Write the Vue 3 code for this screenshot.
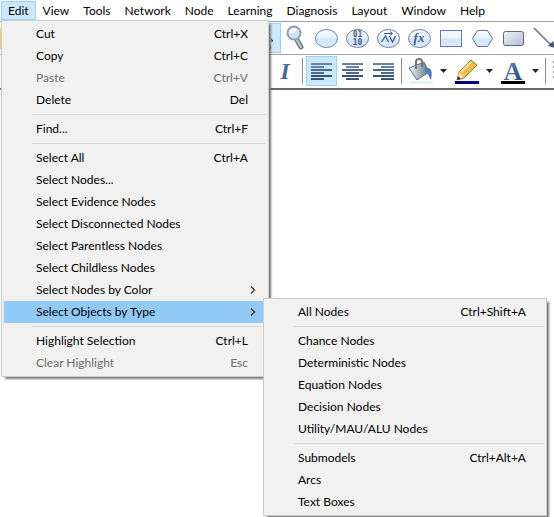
<script setup>
const menus = ['Edit', 'View', 'Tools', 'Network', 'Node', 'Learning', 'Diagnosis', 'Layout', 'Window', 'Help']
const editGroups = [
  [
    { label: 'Cut', key: 'Ctrl+X' },
    { label: 'Copy', key: 'Ctrl+C' },
    { label: 'Paste', key: 'Ctrl+V', disabled: true },
    { label: 'Delete', key: 'Del' },
  ],
  [{ label: 'Find...', key: 'Ctrl+F' }],
  [
    { label: 'Select All', key: 'Ctrl+A' },
    { label: 'Select Nodes...' },
    { label: 'Select Evidence Nodes' },
    { label: 'Select Disconnected Nodes' },
    { label: 'Select Parentless Nodes' },
    { label: 'Select Childless Nodes' },
    { label: 'Select Nodes by Color', sub: true },
    { label: 'Select Objects by Type', sub: true, active: true },
  ],
  [
    { label: 'Highlight Selection', key: 'Ctrl+L' },
    { label: 'Clear Highlight', key: 'Esc', disabled: true },
  ],
]
const typeGroups = [
  [{ label: 'All Nodes', key: 'Ctrl+Shift+A' }],
  [
    { label: 'Chance Nodes' },
    { label: 'Deterministic Nodes' },
    { label: 'Equation Nodes' },
    { label: 'Decision Nodes' },
    { label: 'Utility/MAU/ALU Nodes' },
  ],
  [{ label: 'Submodels', key: 'Ctrl+Alt+A' }, { label: 'Arcs' }, { label: 'Text Boxes' }],
]
const popups = [
  { name: 'edit', title: 'Edit', groups: editGroups },
  { name: 'types', title: 'Select Objects by Type', groups: typeGroups },
]
const alignments = [
  { name: 'Align left', active: true, x: 0 },
  { name: 'Align center', x: 4 },
  { name: 'Align right', x: 8 },
]
</script>

<template>
  <div class="app">
    <nav class="menubar" aria-label="Main menu">
      <button v-for="m in menus" :key="m" :class="{ open: m === 'Edit' }">{{ m }}</button>
    </nav>

    <svg class="defs" aria-hidden="true">
      <defs>
        <linearGradient id="fill" x1="0" y1="0" x2="0" y2="1">
          <stop offset="0" stop-color="#f4f9fe" /><stop offset=".48" stop-color="#e9f3fd" />
          <stop offset=".52" stop-color="#cfe5fb" /><stop offset="1" stop-color="#dcecfc" />
        </linearGradient>
        <linearGradient id="box" x1="0" y1="0" x2="1" y2="1">
          <stop offset="0" stop-color="#f0f3fa" /><stop offset="1" stop-color="#b4bdd6" />
        </linearGradient>
        <linearGradient id="ink" x1="0" y1="0" x2="1" y2="1">
          <stop offset="0" stop-color="#6f92cc" /><stop offset="1" stop-color="#203f7c" />
        </linearGradient>
        <linearGradient id="steel" x1="0" y1="0" x2="1" y2="0">
          <stop offset="0" stop-color="#f5f8fa" /><stop offset="1" stop-color="#5f7183" />
        </linearGradient>
        <linearGradient id="bar" x1="0" y1="0" x2="0" y2="1">
          <stop offset="0" stop-color="#6c87a8" /><stop offset="1" stop-color="#344f78" />
        </linearGradient>
      </defs>
    </svg>

    <div class="toolbar shapes" role="toolbar" aria-label="Drawing tools">
      <span class="folder"></span>
      <button class="tool active" aria-label="Select">
        <svg viewBox="0 0 31 30"><path d="M11 5v18l4-4 3 7 3-1-3-7h5z" fill="#fff" stroke="#333" /></svg>
      </button>
      <button class="tool" aria-label="Zoom">
        <svg viewBox="0 0 31 30">
          <path d="M16 17l4 7" stroke="#74777c" stroke-width="5" stroke-linecap="round" />
          <path d="M16 17l4 7" stroke="#c5c9ce" stroke-width="2" stroke-linecap="round" />
          <circle cx="13" cy="10" r="6.500" fill="#cfe4fa" stroke="#8aa0bb" stroke-width="2" />
          <path d="M8 10a5 5 0 0 1 8-4c-1 4-4 4-8 4z" fill="#f4faff" />
        </svg>
      </button>
      <button class="tool" aria-label="Chance node">
        <svg viewBox="0 0 31 30"><ellipse cx="14.500" cy="15.500" rx="11" ry="9" fill="url(#fill)" stroke="#6580ad" /></svg>
      </button>
      <button class="tool" aria-label="Deterministic node">
        <svg viewBox="0 0 31 30">
          <ellipse cx="14.500" cy="15.500" rx="11" ry="9" fill="url(#fill)" stroke="#6580ad" />
          <text x="14.500" y="14" class="bits">01</text><text x="14.500" y="22" class="bits">10</text>
        </svg>
      </button>
      <button class="tool" aria-label="Utility node">
        <svg viewBox="0 0 31 30">
          <ellipse cx="14.500" cy="15.500" rx="11" ry="9" fill="url(#fill)" stroke="#6580ad" />
          <path d="M7.500 19l4-6 3 6M15.500 13l3 6 3-6" fill="none" stroke="#405898" stroke-width="1.300" />
          <path d="M10 10.500h8M16 8.500l2.500 2-2.500 2" fill="none" stroke="#405898" />
        </svg>
      </button>
      <button class="tool" aria-label="Equation node">
        <svg viewBox="0 0 31 30">
          <ellipse cx="14.500" cy="15.500" rx="11" ry="9" fill="url(#fill)" stroke="#6580ad" />
          <text x="14" y="19" class="fx">fx</text>
        </svg>
      </button>
      <button class="tool" aria-label="Decision node">
        <svg viewBox="0 0 31 30"><rect x="4.500" y="7.500" width="21" height="16" fill="url(#fill)" stroke="#5d7db4" /></svg>
      </button>
      <button class="tool" aria-label="Value node">
        <svg viewBox="0 0 31 30"><path d="M5.500 15.500l5-8h10l5 8-5 8h-10z" fill="url(#fill)" stroke="#5d7294" /></svg>
      </button>
      <button class="tool" aria-label="Submodel">
        <svg viewBox="0 0 31 30"><rect x="5.500" y="8.500" width="20" height="14" rx="2" fill="url(#box)" stroke="#5a6583" /></svg>
      </button>
      <button class="tool" aria-label="Arc">
        <svg viewBox="0 0 31 30"><path d="M5 5l17 17" stroke="#5f6f88" stroke-width="1.500" /><path d="M26 25l-7-2 5-5z" fill="#43587c" /></svg>
      </button>
    </div>

    <div class="toolbar format" role="toolbar" aria-label="Formatting">
      <button class="tool" aria-label="Italic">
        <svg viewBox="0 0 31 30"><text x="16" y="23" class="italic">I</text></svg>
      </button>
      <i class="divider"></i>
      <button v-for="a in alignments" :key="a.name" class="tool" :class="{ active: a.active }" :aria-label="a.name">
        <svg viewBox="0 0 31 30" fill="url(#bar)">
          <path d="M5 7h21v2H5zM5 13h21v2H5zM5 19h21v2H5z" />
          <path :transform="`translate(${a.x} 0)`" d="M5 10h13v2H5zM5 16h13v2H5zM5 22h13v2H5z" />
        </svg>
      </button>
      <i class="divider"></i>
      <button class="split" aria-label="Fill color">
        <svg viewBox="0 0 46 30">
          <path d="M4 12L19 6l5 10-12 8z" fill="url(#steel)" stroke="#5b6c7c" />
          <path d="M11 13V6a3 3 0 0 1 6 0v5" fill="none" stroke="#70757c" stroke-width="2" />
          <path d="M20 12c6-1 8 3 6 12-2-2-2-7-6-9z" fill="#4779c4" />
          <path d="M4 25h24v3H4z" fill="#e0f5f5" /><path d="M35 13h7l-3.500 4z" fill="#222" />
        </svg>
      </button>
      <button class="split" aria-label="Line color">
        <svg viewBox="0 0 46 30">
          <path d="M6 24l2-8L20 4l6 5-13 13z" fill="#f0bd48" stroke="#9b7432" />
          <path d="M10 16L20 6" stroke="#fbe29a" stroke-width="2" />
          <path d="M6 24l2-8 5 5z" fill="#f7deb5" /><path d="M6 24l1-4 3 3z" fill="#333" />
          <path d="M4 25h24v3H4z" fill="#000080" /><path d="M35 13h7l-3.500 4z" fill="#222" />
        </svg>
      </button>
      <button class="split" aria-label="Text color">
        <svg viewBox="0 0 46 30">
          <text x="16" y="24" class="letter">A</text>
          <path d="M4 25h24v3H4z" /><path d="M35 13h7l-3.500 4z" fill="#222" />
        </svg>
      </button>
      <i class="divider"></i>
      <button class="tool" aria-label="Grid">
        <svg viewBox="0 0 31 30"><path d="M4 6h22M4 11h22M4 16h22M4 21h22" stroke="#8098c0" stroke-width="2" stroke-dasharray="2 2" /></svg>
      </button>
    </div>

    <div v-for="p in popups" :key="p.name" class="popup" :class="p.name" role="menu" :aria-label="p.title">
      <div v-for="(g, i) in p.groups" :key="i" class="group" role="group">
        <button v-for="item in g" :key="item.label" role="menuitem" class="item" :class="{ current: item.active }" :disabled="item.disabled">
          <span>{{ item.label }}</span>
          <span v-if="item.key" class="key">{{ item.key }}</span>
          <svg v-if="item.sub" class="chevron" viewBox="0 0 6 8"><path d="M1 0.500l3.500 3.500L1 7.500" fill="none" stroke="#333" stroke-width="1.300" /></svg>
        </button>
      </div>
    </div>
  </div>
</template>

<style>
body { background: #fff; }
</style>

<style scoped>
.app { position: relative; min-height: 100vh; overflow: hidden; font: 12px/20px Lato, "Open Sans", sans-serif; color: #000; }
button { font: inherit; color: inherit; background: none; border: 0; margin: 0; padding: 0; }
svg { display: block; }
.defs { position: absolute; width: 0; height: 0; }
.menubar { display: flex; height: 21px; padding: 1px 0 0 1px; box-sizing: border-box; }
.menubar button { height: 19px; padding: 0 6px; border: 1px solid transparent; line-height: 17px; }
.menubar .open { background: #cce8ff; border-color: #99d1ff; }
.toolbar { display: flex; box-sizing: border-box; border-top: 1px solid #a0a0a0; overflow: hidden; }
.shapes { height: 33px; padding-top: 1px; }
.format { height: 36px; border-bottom: 2px solid #696969; padding: 1px 0 0 269px; }
.folder { width: 1px; height: 21px; margin: 5px 249px 0 0; background: #f3c766; flex: none; }
.tool { width: 31px; height: 30px; flex: none; }
.tool.active { background: #cce8ff; box-shadow: inset 0 0 0 1px #99d1ff; }
.split { width: 46px; height: 30px; flex: none; }
.divider { width: 1px; height: 26px; margin: 2px 3px 2px 2px; background: #8d8d8d; flex: none; }
.bits { font: bold 8px "DejaVu Sans Mono", monospace; fill: #405898; text-anchor: middle; }
.fx { font: italic bold 13px "Liberation Serif", serif; fill: #405898; text-anchor: middle; }
.italic { font: italic bold 24px "Liberation Serif", serif; fill: url(#ink); text-anchor: middle; }
.letter { font: bold 26px "Liberation Serif", serif; fill: url(#ink); text-anchor: middle; }
.popup { position: absolute; box-sizing: border-box; padding: 2px; background: #f1f1f1; border: 1px solid #ccc; box-shadow: 3px 3px 2px -1px #777; }
.edit { left: 1px; top: 20px; width: 268px; }
.types { left: 263px; top: 298px; width: 284px; }
.group + .group::before { content: ""; display: block; height: 1px; margin: 3px 0 3px 28px; background: #d7d7d7; }
.item { display: flex; align-items: center; width: 100%; height: 22px; padding: 0 10px 0 32px; text-align: left; white-space: nowrap; }
.item:disabled { color: #6d6d6d; }
.current { background: #91c9f7; }
.key { margin-left: auto; padding-right: 8px; }
.chevron { width: 6px; height: 8px; margin-left: auto; }
</style>
